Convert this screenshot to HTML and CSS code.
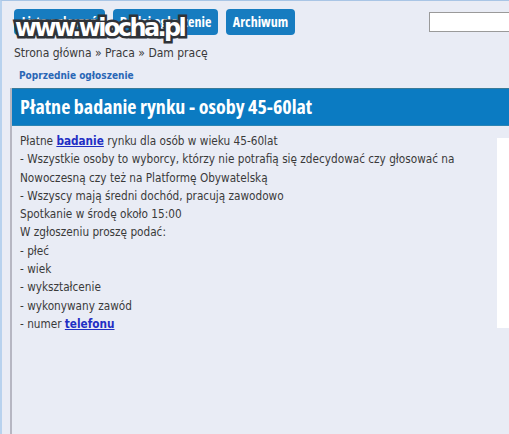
FILE: index.html
```html
<!DOCTYPE html>
<html lang="pl">
  <head>
    <title>Płatne badanie rynku - osoby 45-60lat</title>
    <meta charset="UTF-8">
    <link rel="stylesheet" href="styles.css">
  </head>
  <body>
    <header class="topbar">
      <nav class="menu">
        <a class="btn btn-list" href="">Lista ogłoszeń</a>
        <a class="btn btn-add" href="">Dodaj ogłoszenie</a>
        <a class="btn btn-archive" href="">Archiwum</a>
      </nav>
      <input class="search" type="text" name="q">
      <span class="watermark">www.wiocha.pl</span>
    </header>

    <div class="crumbs">Strona główna &raquo; Praca &raquo; Dam pracę</div>
    <div class="prev"><a href="">Poprzednie ogłoszenie</a></div>

    <main class="ad">
      <h1 class="ad-title">Płatne badanie rynku - osoby 45-60lat</h1>
      <div class="ad-body">
        <aside class="ad-side"></aside>
        <p class="ad-text">
          Płatne <a href="">badanie</a> rynku dla osób w wieku 45-60lat<br>
          - Wszystkie osoby to wyborcy, którzy nie potrafią się zdecydować czy głosować na Nowoczesną czy też na Platformę Obywatelską<br>
          - Wszyscy mają średni dochód, pracują zawodowo<br>
          Spotkanie w środę około 15:00<br>
          W zgłoszeniu proszę podać:<br>
          - płeć<br>
          - wiek<br>
          - wykształcenie<br>
          - wykonywany zawód<br>
          - numer <a href="">telefonu</a>
        </p>
      </div>
    </main>
  </body>
</html>
```

FILE: styles.css
```css
/* Page */

html {
  font-size: 12px;
}

body {
  margin: 0;
  height: 434px;
  overflow: hidden;
  background-color: #e9ecf5;
  border-top: 1px solid #a9c5e5;
  border-left: 2px solid #b8d2ee;
  font-family: "DejaVu Sans Condensed", "DejaVu Sans", sans-serif;
  color: #333;
}

/* Top menu */

.topbar {
  position: relative;
  display: flex;
  align-items: center;
  padding: 8px 0 0 12px;
}

.menu {
  display: flex;
  gap: 8px;
}

.btn {
  display: block;
  height: 26px;
  line-height: 26px;
  border-radius: 4px;
  background-color: #177cc0;
  color: white;
  font-family: "Open Sans", sans-serif;
  font-stretch: 75%;
  font-weight: bold;
  font-size: 14px;
  text-align: center;
  text-decoration: none;
  white-space: nowrap;
  overflow: hidden;
}

.btn-list {
  width: 91px;
}

.btn-add {
  width: 105px;
}

.btn-archive {
  width: 69px;
}

.search {
  margin-left: 134px;
  margin-top: 0;
  width: 90px;
  height: 18px;
  padding: 0;
  border: 1px solid #9a9a9a;
  background-color: white;
}

/* Site stamp drawn over the menu */
.watermark {
  position: absolute;
  left: 13px;
  top: 15px;
  line-height: 24px;
  font-family: "DejaVu Sans", sans-serif;
  font-weight: bold;
  font-size: 24px;
  letter-spacing: -2.6px;
  color: white;
  -webkit-text-stroke: 5px #2f3338;
  paint-order: stroke fill;
}

/* Breadcrumbs and navigation */

.crumbs {
  padding: 11px 0 0 12px;
  font-size: 12px;
  color: #3a3a3a;
}

.prev {
  padding: 8px 0 0 17px;
}

.prev a {
  font-size: 10px;
  font-weight: bold;
  color: #2a67b5;
  text-decoration: none;
}

/* Ad box */

.ad {
  margin: 6px 0 0 8px;
  min-height: 360px;
  border-left: 2px solid #b6b6c2;
}

.ad-title {
  margin: 0;
  height: 36px;
  line-height: 36px;
  padding-left: 8px;
  border-top: 1px solid #3a7b98;
  border-bottom: 1px solid #2c85b4;
  background-color: #0b7bc2;
  color: white;
  font-family: "Open Sans", sans-serif;
  font-stretch: 75%;
  font-size: 20px;
  font-weight: bold;
}

.ad-body {
  padding: 6px 0 0 8px;
}

.ad-side {
  float: right;
  width: 12px;
  height: 190px;
  margin-top: 6px;
  background-color: white;
}

.ad-text {
  margin: 0;
  padding-right: 30px;
  line-height: 18.3px;
  font-size: 11.7px;
  color: #3a3a3a;
}

.ad-text a {
  font-weight: bold;
  color: #1f2fc4;
}
```
